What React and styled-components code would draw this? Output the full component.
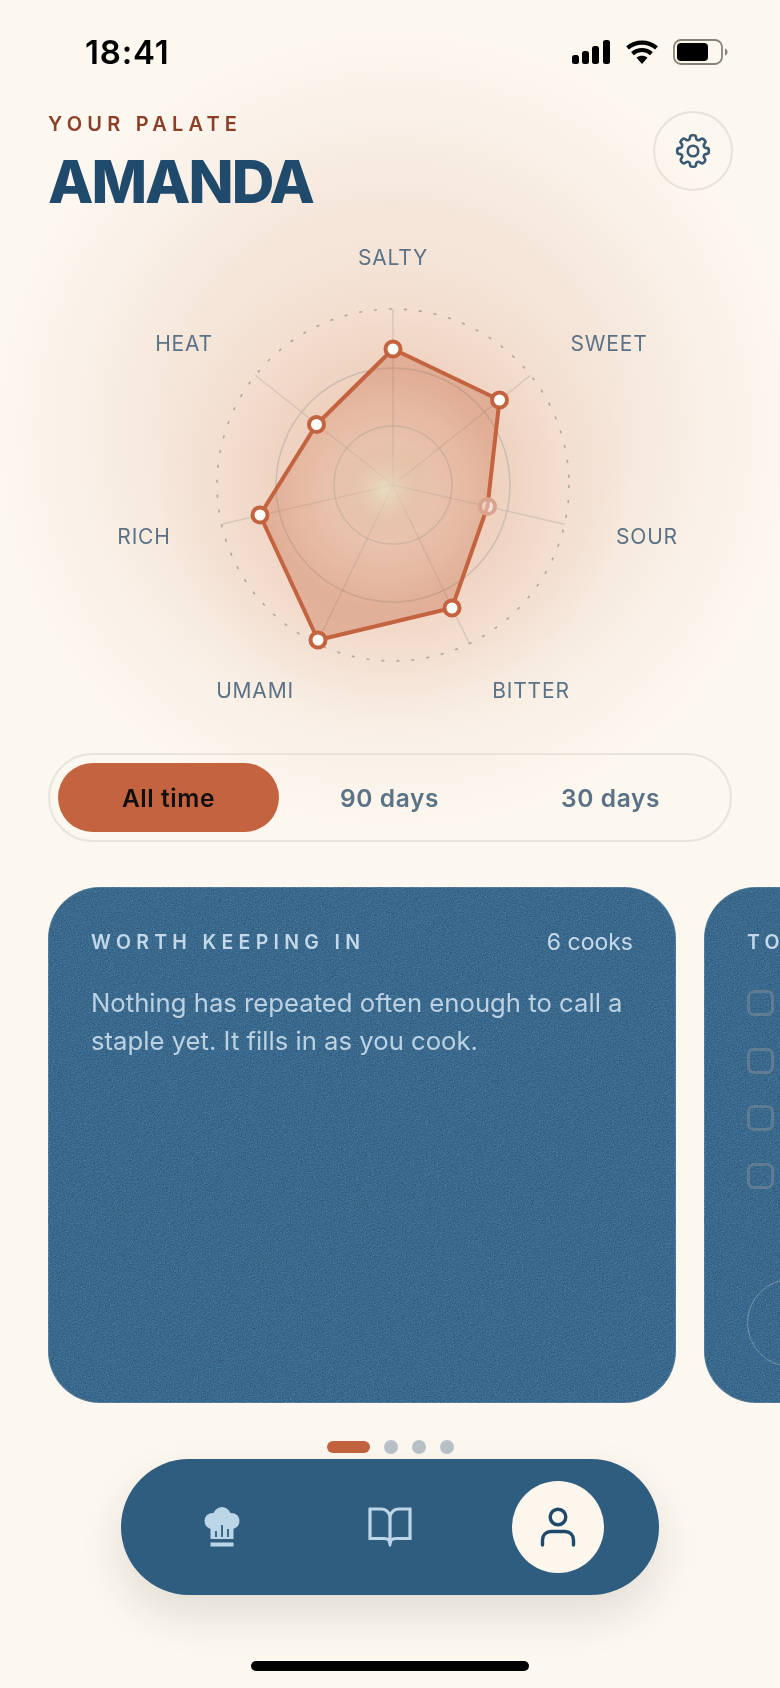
import React from 'react'
import styled, { createGlobalStyle } from 'styled-components'
import { HiOutlineCog8Tooth } from 'react-icons/hi2'

const CENTER = { x: 393, y: 485 }
const RINGS = [59, 117]
const OUTER = 176

const AXES = [0, 1, 2, 3, 4, 5, 6].map((i) => {
    const a = (i * 2 * Math.PI) / 7
    return { x: CENTER.x + OUTER * Math.sin(a), y: CENTER.y - OUTER * Math.cos(a) }
})

const POINTS = [
    { x: 393, y: 349 },
    { x: 499.5, y: 400 },
    { x: 487.5, y: 506.5, faded: true },
    { x: 452, y: 608 },
    { x: 318, y: 640 },
    { x: 260, y: 515 },
    { x: 316.5, y: 424.5 },
]

const LABELS = [
    { text: 'SALTY', x: 393, y: 257 },
    { text: 'SWEET', x: 609, y: 343 },
    { text: 'SOUR', x: 647, y: 536 },
    { text: 'BITTER', x: 531, y: 690 },
    { text: 'UMAMI', x: 255, y: 690 },
    { text: 'RICH', x: 144, y: 536 },
    { text: 'HEAT', x: 184, y: 343 },
]

const App = () => {
    return (
        <Page>
            <GlobalStyle />
            <StatusBar>
                <Time>18:41</Time>
                <StatusIcons>
                    <svg width="40" height="25" viewBox="0 0 40 25">
                        <rect x="1" y="15" width="7" height="9" rx="2.5" fill="#000" />
                        <rect x="11" y="11" width="7" height="13" rx="2.5" fill="#000" />
                        <rect x="21" y="6" width="7" height="18" rx="2.5" fill="#000" />
                        <rect x="32" y="0" width="7" height="24" rx="2.5" fill="#000" />
                    </svg>
                    <svg width="34" height="24" viewBox="0 0 34 24">
                        <path d="M17 24l-5.5-6.2c3.2-2.6 7.8-2.6 11 0z" fill="#000" />
                        <path d="M7.5 13.6c5.6-4.8 13.4-4.8 19 0M2.5 7.8C10.800.8 23.200.8 31.500 7.800" fill="none" stroke="#000" strokeWidth="4.200" />
                    </svg>
                    <svg width="55" height="26" viewBox="0 0 55 26">
                        <rect x="1" y="1" width="48" height="24" rx="7" fill="none" stroke="#85847a" strokeWidth="1.800" />
                        <rect x="4" y="4" width="31" height="18" rx="4" fill="#000" />
                        <path d="M52 9.500c1.800.6 2.500 2 2.500 3.500s-.7 2.900-2.500 3.500z" fill="#85847a" />
                    </svg>
                </StatusIcons>
            </StatusBar>

            <Header>
                <div>
                    <Eyebrow>YOUR PALATE</Eyebrow>
                    <Name>AMANDA</Name>
                </div>
                <GearButton>
                    <HiOutlineCog8Tooth size={42} />
                </GearButton>
            </Header>

            <Chart viewBox="0 220 780 500">
                <defs>
                    <radialGradient id="shape" gradientUnits="userSpaceOnUse" cx="385" cy="490" r="170">
                        <stop offset="0" stopColor="#e6e2c4" stopOpacity="0.75" />
                        <stop offset="0.3" stopColor="#d99f80" stopOpacity="0.24" />
                        <stop offset="0.7" stopColor="#c4633f" stopOpacity="0.33" />
                        <stop offset="1" stopColor="#c4633f" stopOpacity="0.37" />
                    </radialGradient>
                </defs>
                {RINGS.map((r) => (
                    <circle key={r} cx={CENTER.x} cy={CENTER.y} r={r} fill="none" stroke="#b5ada2" strokeOpacity="0.6" strokeWidth="1.500" />
                ))}
                <circle cx={CENTER.x} cy={CENTER.y} r={OUTER} fill="none" stroke="#8f8d88" strokeOpacity="0.7" strokeWidth="1.600" strokeDasharray="3 12" />
                {AXES.map((p, i) => (
                    <line key={i} x1={CENTER.x} y1={CENTER.y} x2={p.x} y2={p.y} stroke="#b5ada2" strokeOpacity="0.45" strokeWidth="1.500" />
                ))}
                <polygon
                    points={POINTS.map((p) => `${p.x},${p.y}`).join(' ')}
                    fill="url(#shape)"
                    stroke="#c4633f"
                    strokeWidth="4"
                    strokeLinejoin="round"
                />
                {POINTS.map((p, i) => (
                    <circle
                        key={i}
                        cx={p.x}
                        cy={p.y}
                        r="7.500"
                        fill="#fffdf8"
                        fillOpacity={p.faded ? 0.45 : 1}
                        stroke={p.faded ? '#d9a48e' : '#c4633f'}
                        strokeWidth="4"
                    />
                ))}
                {LABELS.map((l) => (
                    <AxisLabel key={l.text} x={l.x} y={l.y} textAnchor="middle" dominantBaseline="central">
                        {l.text}
                    </AxisLabel>
                ))}
            </Chart>

            <Segmented>
                <Segment $active>All time</Segment>
                <Segment>90 days</Segment>
                <Segment>30 days</Segment>
            </Segmented>

            <CardRow>
                <Card>
                    <Grain />
                    <CardHead>
                        <CardTitle>WORTH KEEPING IN</CardTitle>
                        <CardMeta>6 cooks</CardMeta>
                    </CardHead>
                    <CardBody>Nothing has repeated often enough to call a staple yet. It fills in as you cook.</CardBody>
                </Card>
                <Card>
                    <Grain />
                    <CardHead>
                        <CardTitle>TO TRY NEXT</CardTitle>
                    </CardHead>
                    <Checks>
                        <Check />
                        <Check />
                        <Check />
                        <Check />
                    </Checks>
                    <Ring />
                </Card>
            </CardRow>

            <Dots>
                <Dot $active />
                <Dot />
                <Dot />
                <Dot />
            </Dots>

            <Nav>
                <NavItem>
                    <svg width="36" height="40" viewBox="0 0 36 40" fill="#bcd5e7">
                        <circle cx="8.500" cy="14" r="8" />
                        <circle cx="18" cy="9" r="9" />
                        <circle cx="27.500" cy="14" r="8" />
                        <rect x="6.500" y="13" width="23" height="19" />
                        <rect x="6.500" y="35.500" width="23" height="4" />
                        <path d="M12 24v6M18 18v12M24 22v8" stroke="#2f5d80" strokeWidth="1.800" fill="none" />
                    </svg>
                </NavItem>
                <NavItem>
                    <svg width="44" height="40" viewBox="0 0 44 40">
                        <path d="M22 9C20.500 4.500 17 2 13 2H2v29.500h14c3 0 5 1 6 3.500 1-2.500 3-3.500 6-3.500h14V2H31c-4 0-7.500 2.500-9 7z" fill="none" stroke="#bcd5e7" strokeWidth="3.200" />
                        <path d="M22 9v26" stroke="#bcd5e7" strokeWidth="3.200" />
                        <path d="M19.500 33h5l-1.500 6.500h-2z" fill="#bcd5e7" />
                    </svg>
                </NavItem>
                <ActiveNavItem>
                    <svg width="36" height="40" viewBox="0 0 36 40">
                        <circle cx="18" cy="10" r="7.800" fill="none" stroke="#1f4a6b" strokeWidth="3.400" />
                        <path d="M2.500 38v-5c0-5 3.500-8.500 8.500-8.500h14c5 0 8.500 3.500 8.500 8.500v5" fill="none" stroke="#1f4a6b" strokeWidth="3.400" strokeLinecap="round" />
                    </svg>
                </ActiveNavItem>
            </Nav>

            <HomeBar />
        </Page>
    )
}

// noise over the cards, drawn so it stays inside the rounded corners
const Grain = () => (
    <GrainSvg aria-hidden="true">
        <filter id="grain" colorInterpolationFilters="sRGB">
            <feTurbulence type="fractalNoise" baseFrequency="0.75" numOctaves="3" stitchTiles="stitch" />
            <feColorMatrix type="matrix" values="0.33 0.33 0.33 0 0  0.33 0.33 0.33 0 0  0.33 0.33 0.33 0 0  0 0 0 0 1" />
        </filter>
        <rect width="100%" height="100%" filter="url(#grain)" />
    </GrainSvg>
)

export default App

const GlobalStyle = createGlobalStyle`
    html,body{
        margin:0;
        padding:0;
        background:#fcf7ef;
    }
    *{
        box-sizing:border-box;
    }
`
const Page = styled.div`
    width:780px;
    height:1688px;
    overflow:hidden;
    display:flex;
    flex-direction:column;
    font-family:Inter,"Noto Sans",sans-serif;
    background:
        radial-gradient(circle 235px at 393px 485px, rgba(230,178,152,.5) 0%, rgba(232,184,160,.42) 45%, rgba(238,200,180,.22) 75%, rgba(245,225,210,0) 100%),
        radial-gradient(circle 400px at 393px 430px, rgba(243,224,209,.95) 0%, rgba(244,228,215,.9) 55%, rgba(248,236,226,.55) 80%, rgba(252,247,239,0) 100%),
        #fcf7ef;
`
const StatusBar = styled.div`
    height:104px;
    flex:none;
    display:flex;
    align-items:center;
    justify-content:space-between;
    padding:0 52px 0 85px;
`
const Time = styled.div`
    font-size:33px;
    font-weight:600;
    color:#000;
    letter-spacing:.8px;
`
const StatusIcons = styled.div`
    display:flex;
    align-items:center;
    gap:14px;
    svg{
        display:block;
    }
`
const Header = styled.div`
    flex:none;
    height:116px;
    display:flex;
    justify-content:space-between;
    align-items:flex-start;
    padding:0 47px 0 48px;
`
const Eyebrow = styled.div`
    font-size:20px;
    line-height:24px;
    margin-top:8px;
    font-weight:600;
    letter-spacing:5.2px;
    color:#8a3f27;
`
const Name = styled.h1`
    margin:14px 0 0;
    font-size:59px;
    line-height:64px;
    font-weight:800;
    letter-spacing:-2px;
    color:#1f4a6b;
`
const GearButton = styled.div`
    width:80px;
    height:80px;
    margin-top:7px;
    border-radius:50%;
    border:2px solid #e8e3d9;
    color:#3a5a73;
    display:flex;
    align-items:center;
    justify-content:center;
`
const Chart = styled.svg`
    display:block;
    flex:none;
    width:780px;
    height:500px;
`
const AxisLabel = styled.text`
    font-family:Inter,"Noto Sans",sans-serif;
    font-size:21px;
    letter-spacing:.8px;
    fill:#5b7286;
`
const Segmented = styled.div`
    flex:none;
    margin:33px 0 0 48px;
    width:684px;
    height:89px;
    padding:8px;
    border-radius:45px;
    border:2px solid #e9e4da;
    display:flex;
`
const Segment = styled.div`
    width:221px;
    height:69px;
    border-radius:35px;
    display:flex;
    align-items:center;
    justify-content:center;
    font-size:24.5px;
    font-weight:600;
    letter-spacing:.6px;
    color:${(p) => (p.$active ? '#12100e' : '#5b7286')};
    background:${(p) => (p.$active ? '#c4633f' : 'transparent')};
`
const CardRow = styled.div`
    flex:none;
    margin-top:45px;
    padding-left:48px;
    display:flex;
    gap:28px;
    width:780px;
    overflow:hidden;
`
const Card = styled.div`
    position:relative;
    flex:none;
    width:628px;
    height:516px;
    padding:43px;
    border-radius:52px;
    overflow:hidden;
    background:#3a698d;
    box-shadow:inset 0 0 0 1px rgba(255,255,255,.12);
`
const GrainSvg = styled.svg`
    position:absolute;
    inset:0;
    width:100%;
    height:100%;
    opacity:.55;
    mix-blend-mode:overlay;
    pointer-events:none;
`
const CardHead = styled.div`
    position:relative;
    display:flex;
    justify-content:space-between;
    align-items:center;
    height:24px;
`
const CardTitle = styled.div`
    font-size:19.5px;
    font-weight:600;
    letter-spacing:5.3px;
    white-space:nowrap;
    color:#c3d8e8;
`
const CardMeta = styled.div`
    font-size:23px;
    color:#c6d9e8;
`
const CardBody = styled.p`
    position:relative;
    margin:30px 0 0;
    font-size:25.7px;
    line-height:38px;
    color:#bcd2e3;
`
const Checks = styled.div`
    position:relative;
    margin-top:36px;
    display:flex;
    flex-direction:column;
    gap:31.5px;
`
const Check = styled.div`
    width:27px;
    height:26px;
    border-radius:7px;
    border:3px solid rgba(150,150,150,.42);
`
const Ring = styled.div`
    position:relative;
    margin-top:90px;
    width:88px;
    height:88px;
    border-radius:50%;
    border:1.5px solid rgba(255,255,255,.28);
`
const Dots = styled.div`
    flex:none;
    margin-top:37px;
    height:13px;
    display:flex;
    justify-content:center;
    align-items:center;
    gap:14px;
`
const Dot = styled.div`
    width:${(p) => (p.$active ? '43px' : '14px')};
    height:${(p) => (p.$active ? '12px' : '14px')};
    border-radius:7px;
    background:${(p) => (p.$active ? '#c4633f' : '#b9c2c8')};
`
const Nav = styled.div`
    flex:none;
    margin:6px 0 0 121px;
    width:538px;
    height:136px;
    border-radius:68px;
    background:#2f5d80;
    box-shadow:0 20px 44px rgba(60,60,40,.13);
    display:grid;
    grid-template-columns:repeat(3,168px);
    align-items:center;
    justify-items:center;
    padding:0 17px;
`
const NavItem = styled.div`
    display:flex;
    align-items:center;
    justify-content:center;
    width:92px;
    height:92px;
    svg{
        display:block;
    }
`
const ActiveNavItem = styled(NavItem)`
    border-radius:50%;
    background:#fcf6ec;
`
const HomeBar = styled.div`
    flex:none;
    margin:66px 0 0 251px;
    width:278px;
    height:10px;
    border-radius:5px;
    background:#000;
`
